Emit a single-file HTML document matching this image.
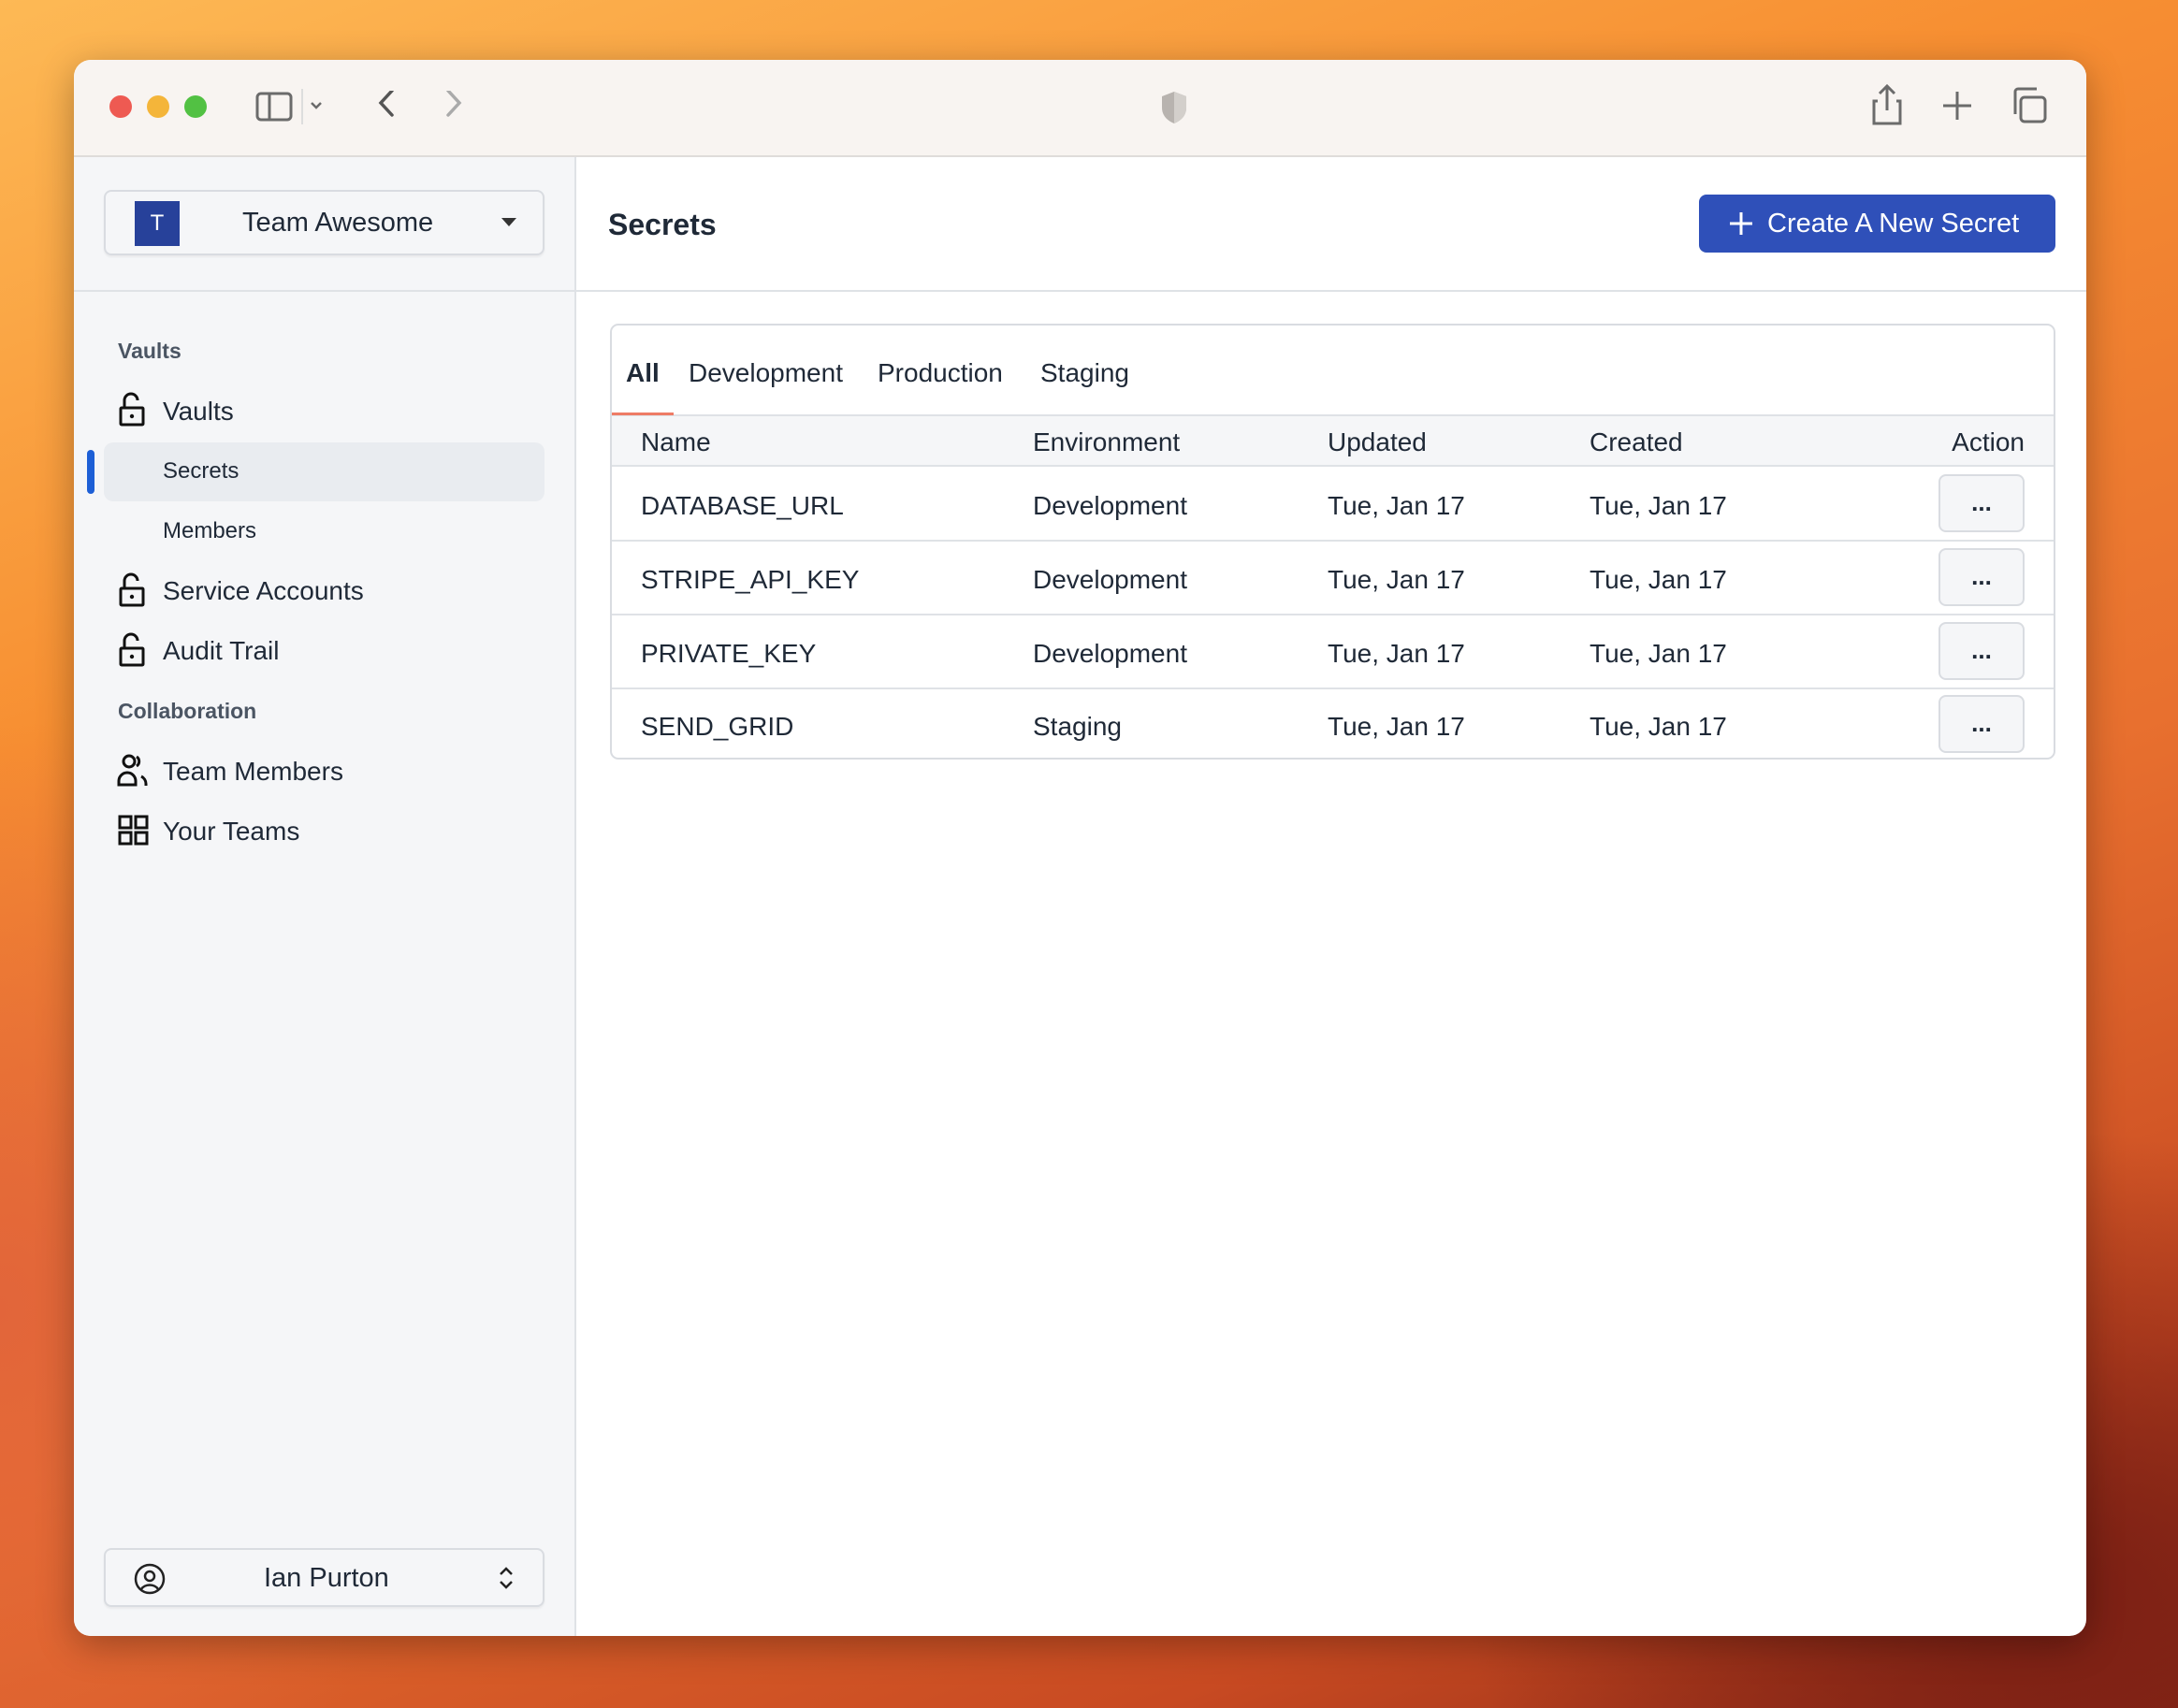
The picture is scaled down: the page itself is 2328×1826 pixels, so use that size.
<!DOCTYPE html>
<html><head><meta charset="utf-8"><style>
*{margin:0;padding:0;box-sizing:border-box}
body{width:2328px;height:1826px;overflow:hidden;position:relative;font-family:"Liberation Sans",sans-serif;color:#1f2937;
background:
radial-gradient(ellipse 900px 700px at 2200px 1700px,#7a1f14 0%,rgba(122,31,20,0) 70%),
radial-gradient(ellipse 700px 900px at 0px 1400px,#e2653a 0%,rgba(226,101,58,0) 70%),
linear-gradient(160deg,#fdb955 0%,#f78f32 30%,#e8702f 60%,#c84a22 85%,#8c2a16 100%);}
.a{position:absolute}
.win{left:79px;top:64px;width:2151px;height:1685px;border-radius:18px;overflow:hidden;background:#fff;box-shadow:0 10px 40px rgba(0,0,0,.3)}
.tb{left:0;top:0;width:2151px;height:104px;background:#f8f4f1;border-bottom:2px solid #dfdcda}
.dot{width:24px;height:24px;border-radius:50%;top:38px}
.side{left:0;top:104px;width:537px;height:1581px;background:#f5f6f8;border-right:2px solid #dfe2e6}
.sel{border:2px solid #d9dce1;border-radius:8px;background:#f5f6f8;box-shadow:0 2px 2px rgba(0,0,0,.05)}
.lbl{font-size:23px;font-weight:bold;color:#4b5563}
.it{font-size:28px;color:#1f2937}
.sub{font-size:24px;color:#1f2937}
.t{font-size:28px;color:#1f2937;white-space:nowrap}
.btn{width:92px;height:62px;border:2px solid #d9dce1;border-radius:8px;background:#f5f6f8;font-size:26px;font-weight:bold;text-align:center;line-height:56px}
.hl{height:2px;background:#dfe2e6}
</style></head><body>
<div class="a win">
 <div class="a tb">
  <div class="a dot" style="left:38px;background:#ee5a52"></div>
  <div class="a dot" style="left:78px;background:#f4b53a"></div>
  <div class="a dot" style="left:118px;background:#52c143"></div>
  <svg class="a" style="left:194px;top:21px" width="120" height="60" viewBox="0 0 120 60"><rect x="2" y="15" width="36" height="28" rx="4" fill="none" stroke="#6b6b6b" stroke-width="3"/><line x1="15" y1="15" x2="15" y2="43" stroke="#6b6b6b" stroke-width="3"/><line x1="50" y1="10" x2="50" y2="48" stroke="#ddd" stroke-width="2"/><path d="M60 25l5 5 5-5" fill="none" stroke="#6b6b6b" stroke-width="2.5"/></svg>
  <svg class="a" style="left:322px;top:33px" width="100" height="50"><path d="M18 0L6 13 18 26" fill="none" stroke="#555" stroke-width="3.5" stroke-linecap="round"/><path d="M78 0l12 13-12 13" fill="none" stroke="#aaa" stroke-width="3.5" stroke-linecap="round"/></svg>
  <svg class="a" style="left:1160px;top:31px" width="32" height="40"><path d="M16 3L3 8v12c0 9 6 14 13 17 7-3 13-8 13-17V8z" fill="#b8b3af"/><path d="M16 3v34c7-3 13-8 13-17V8z" fill="#d3cfcb"/></svg>
  <svg class="a" style="left:1918px;top:24px" width="200" height="50"><path d="M20 4v26M12 12l8-8 8 8M10 20H6v24h28V20h-4" fill="none" stroke="#6b6b6b" stroke-width="3"/><path d="M95 10v30M80 25h30" stroke="#6b6b6b" stroke-width="3"/><rect x="163" y="16" width="26" height="26" rx="4" fill="none" stroke="#6b6b6b" stroke-width="3"/><path d="M157 34V10a3 3 0 0 1 3-3h20" fill="none" stroke="#6b6b6b" stroke-width="3"/></svg>
 </div>
 <div class="a side">
  <div class="a sel" style="left:32px;top:35px;width:471px;height:70px">
   <div class="a" style="left:31px;top:10px;width:48px;height:48px;background:#27419a;color:#fff;font-size:24px;text-align:center;line-height:48px">T</div>
   <div class="a t" style="left:146px;top:17px;font-size:29px">Team Awesome</div>
   <svg class="a" style="left:423px;top:28px" width="18" height="12"><path d="M0 0h16L8 9z" fill="#333"/></svg>
  </div>
  <div class="a hl" style="left:0;top:142px;width:537px"></div>
  <div class="a lbl" style="left:47px;top:194px">Vaults</div>
  <svg class="a" style="left:47px;top:251px" width="30" height="40" viewBox="0 0 30 40"><path d="M7 16V9a7 7 0 0 1 14 0" fill="none" stroke="#111" stroke-width="3"/><rect x="3" y="17" width="24" height="18" rx="1" fill="none" stroke="#111" stroke-width="3"/><circle cx="15" cy="26" r="2.2" fill="#111"/></svg>
  <div class="a it" style="left:95px;top:256px">Vaults</div>
  <div class="a" style="left:14px;top:313px;width:8px;height:47px;border-radius:4px;background:#1d5fd6"></div>
  <div class="a" style="left:32px;top:305px;width:471px;height:63px;border-radius:10px;background:#e9ecf0"></div>
  <div class="a sub" style="left:95px;top:322px">Secrets</div>
  <div class="a sub" style="left:95px;top:386px">Members</div>
  <svg class="a" style="left:47px;top:444px" width="30" height="40" viewBox="0 0 30 40"><path d="M7 16V9a7 7 0 0 1 14 0" fill="none" stroke="#111" stroke-width="3"/><rect x="3" y="17" width="24" height="18" rx="1" fill="none" stroke="#111" stroke-width="3"/><circle cx="15" cy="26" r="2.2" fill="#111"/></svg>
  <div class="a it" style="left:95px;top:448px">Service Accounts</div>
  <svg class="a" style="left:47px;top:508px" width="30" height="40" viewBox="0 0 30 40"><path d="M7 16V9a7 7 0 0 1 14 0" fill="none" stroke="#111" stroke-width="3"/><rect x="3" y="17" width="24" height="18" rx="1" fill="none" stroke="#111" stroke-width="3"/><circle cx="15" cy="26" r="2.2" fill="#111"/></svg>
  <div class="a it" style="left:95px;top:512px">Audit Trail</div>
  <div class="a lbl" style="left:47px;top:579px">Collaboration</div>
  <svg class="a" style="left:46px;top:637px" width="34" height="38" viewBox="0 0 34 38"><circle cx="13" cy="9" r="6" fill="none" stroke="#111" stroke-width="3"/><path d="M2 34v-4a9 9 0 0 1 18 0v4z" fill="none" stroke="#111" stroke-width="3"/><path d="M21 4a6 6 0 0 1 0 10M26 25a9 9 0 0 1 5 8v2" fill="none" stroke="#111" stroke-width="3"/></svg>
  <div class="a it" style="left:95px;top:641px">Team Members</div>
  <svg class="a" style="left:47px;top:703px" width="34" height="34" viewBox="0 0 34 34"><rect x="2" y="2" width="12" height="12" fill="none" stroke="#111" stroke-width="3"/><rect x="19" y="2" width="12" height="12" fill="none" stroke="#111" stroke-width="3"/><rect x="2" y="19" width="12" height="12" fill="none" stroke="#111" stroke-width="3"/><rect x="19" y="19" width="12" height="12" fill="none" stroke="#111" stroke-width="3"/></svg>
  <div class="a it" style="left:95px;top:705px">Your Teams</div>
  <div class="a sel" style="left:32px;top:1487px;width:471px;height:63px">
   <svg class="a" style="left:30px;top:14px" width="34" height="34"><circle cx="17" cy="17" r="15" fill="none" stroke="#222" stroke-width="2.5"/><circle cx="17" cy="14" r="5" fill="none" stroke="#222" stroke-width="2.5"/><path d="M8 28a10 8 0 0 1 18 0" fill="none" stroke="#222" stroke-width="2.5"/></svg>
   <div class="a t" style="left:169px;top:14px;font-size:29px">Ian Purton</div>
   <svg class="a" style="left:420px;top:17px" width="16" height="26"><path d="M2 9l6-6 6 6M2 17l6 6 6-6" fill="none" stroke="#222" stroke-width="2.5"/></svg>
  </div>
 </div>
 <div class="a" style="left:571px;top:158px;font-size:32px;font-weight:bold;color:#1f2937">Secrets</div>
 <div class="a" style="left:1737px;top:144px;width:381px;height:62px;border-radius:8px;background:#2f50b9;color:#fff;font-size:29px;line-height:62px">
  <svg class="a" style="left:32px;top:18px" width="26" height="26"><path d="M13 1v24M1 13h24" stroke="#fff" stroke-width="3"/></svg>
  <span class="a" style="left:73px;top:0">Create A New Secret</span>
 </div>
 <div class="a hl" style="left:537px;top:246px;width:1614px"></div>
 <div class="a" style="left:573px;top:282px;width:1545px;height:466px;border:2px solid #d9dce1;border-radius:9px;overflow:hidden;background:#fff">
  <div class="a t" style="left:15px;top:35px;font-weight:bold">All</div>
  <div class="a t" style="left:82px;top:35px">Development</div>
  <div class="a t" style="left:284px;top:35px">Production</div>
  <div class="a t" style="left:458px;top:35px">Staging</div>
  <div class="a" style="left:0;top:95px;width:1545px;height:56px;background:#f5f6f8;border-top:2px solid #dfe2e6;border-bottom:2px solid #dfe2e6"></div>
  <div class="a" style="left:0;top:93px;width:66px;height:3px;background:#ee7c66"></div>
  <div class="a t" style="left:31px;top:109px">Name</div>
  <div class="a t" style="left:450px;top:109px">Environment</div>
  <div class="a t" style="left:765px;top:109px">Updated</div>
  <div class="a t" style="left:1045px;top:109px">Created</div>
  <div class="a t" style="right:31px;top:109px">Action</div>
  <div class="a t" style="left:31px;top:177px">DATABASE_URL</div><div class="a t" style="left:450px;top:177px">Development</div><div class="a t" style="left:765px;top:177px">Tue, Jan 17</div><div class="a t" style="left:1045px;top:177px">Tue, Jan 17</div><div class="a btn" style="left:1418px;top:159px">...</div>
  <div class="a hl" style="left:0;top:229px;width:1545px"></div>
  <div class="a t" style="left:31px;top:256px">STRIPE_API_KEY</div><div class="a t" style="left:450px;top:256px">Development</div><div class="a t" style="left:765px;top:256px">Tue, Jan 17</div><div class="a t" style="left:1045px;top:256px">Tue, Jan 17</div><div class="a btn" style="left:1418px;top:238px">...</div>
  <div class="a hl" style="left:0;top:308px;width:1545px"></div>
  <div class="a t" style="left:31px;top:335px">PRIVATE_KEY</div><div class="a t" style="left:450px;top:335px">Development</div><div class="a t" style="left:765px;top:335px">Tue, Jan 17</div><div class="a t" style="left:1045px;top:335px">Tue, Jan 17</div><div class="a btn" style="left:1418px;top:317px">...</div>
  <div class="a hl" style="left:0;top:387px;width:1545px"></div>
  <div class="a t" style="left:31px;top:413px">SEND_GRID</div><div class="a t" style="left:450px;top:413px">Staging</div><div class="a t" style="left:765px;top:413px">Tue, Jan 17</div><div class="a t" style="left:1045px;top:413px">Tue, Jan 17</div><div class="a btn" style="left:1418px;top:395px">...</div>
 </div>
</div>
</body></html>
